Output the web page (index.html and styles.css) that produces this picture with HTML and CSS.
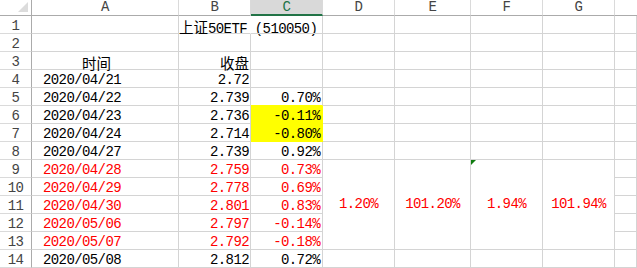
FILE: index.html
```html
<!DOCTYPE html>
<html lang="zh-CN">
<head>
<meta charset="utf-8">
<title>Sheet</title>
<link rel="stylesheet" href="styles.css">
</head>
<body>
<div class="sheet">
  <div class="c corner"><svg width="10" height="10" viewBox="0 0 10 10"><polygon points="10,0 10,10 0,10" fill="#dcdcdc"/></svg></div>
  <div class="c hd">A</div>
  <div class="c hd">B</div>
  <div class="c hd sel">C</div>
  <div class="c hd">D</div>
  <div class="c hd">E</div>
  <div class="c hd">F</div>
  <div class="c hd">G</div>
  <div class="c hd last"></div>

  <div class="c rh">1</div>
  <div class="c"></div>
  <div class="c nr title"><span class="cj">上证</span>50ETF (510050)</div>
  <div class="c"></div>
  <div class="c"></div><div class="c"></div><div class="c"></div><div class="c"></div><div class="c"></div>

  <div class="c rh">2</div>
  <div class="c"></div><div class="c"></div><div class="c"></div>
  <div class="c"></div><div class="c"></div><div class="c"></div><div class="c"></div><div class="c"></div>

  <div class="c rh">3</div>
  <div class="c lh"><span class="cj">时间</span></div>
  <div class="c r"><span class="cj">收盘</span></div>
  <div class="c"></div>
  <div class="c"></div><div class="c"></div><div class="c"></div><div class="c"></div><div class="c"></div>

  <div class="c rh">4</div>
  <div class="c l">2020/04/21</div>
  <div class="c r">2.72</div>
  <div class="c"></div>
  <div class="c"></div><div class="c"></div><div class="c"></div><div class="c"></div><div class="c"></div>

  <div class="c rh">5</div>
  <div class="c l">2020/04/22</div>
  <div class="c r">2.739</div>
  <div class="c rp yb">0.70%</div>
  <div class="c"></div><div class="c"></div><div class="c"></div><div class="c"></div><div class="c"></div>

  <div class="c rh">6</div>
  <div class="c l">2020/04/23</div>
  <div class="c r">2.736</div>
  <div class="c rp yel">-0.11%</div>
  <div class="c"></div><div class="c"></div><div class="c"></div><div class="c"></div><div class="c"></div>

  <div class="c rh">7</div>
  <div class="c l">2020/04/24</div>
  <div class="c r">2.714</div>
  <div class="c rp yel">-0.80%</div>
  <div class="c"></div><div class="c"></div><div class="c"></div><div class="c"></div><div class="c"></div>

  <div class="c rh">8</div>
  <div class="c l">2020/04/27</div>
  <div class="c r">2.739</div>
  <div class="c rp">0.92%</div>
  <div class="c"></div><div class="c"></div><div class="c"></div><div class="c"></div><div class="c"></div>

  <div class="c rh">9</div>
  <div class="c l red">2020/04/28</div>
  <div class="c r red">2.759</div>
  <div class="c rp red">0.73%</div>
  <div class="c m5 red">1.20%</div>
  <div class="c m5 red">101.20%</div>
  <div class="c m5 red note">1.94%<span class="tri"></span></div>
  <div class="c m5 red">101.94%</div>
  <div class="c"></div>

  <div class="c rh">10</div>
  <div class="c l red">2020/04/29</div>
  <div class="c r red">2.778</div>
  <div class="c rp red">0.69%</div>
  <div class="c"></div>

  <div class="c rh">11</div>
  <div class="c l red">2020/04/30</div>
  <div class="c r red">2.801</div>
  <div class="c rp red">0.83%</div>
  <div class="c"></div>

  <div class="c rh">12</div>
  <div class="c l red">2020/05/06</div>
  <div class="c r red">2.797</div>
  <div class="c rp red">-0.14%</div>
  <div class="c"></div>

  <div class="c rh">13</div>
  <div class="c l red">2020/05/07</div>
  <div class="c r red">2.792</div>
  <div class="c rp red">-0.18%</div>
  <div class="c"></div>

  <div class="c rh">14</div>
  <div class="c l">2020/05/08</div>
  <div class="c r">2.812</div>
  <div class="c rp">0.72%</div>
  <div class="c"></div><div class="c"></div><div class="c"></div><div class="c"></div><div class="c"></div>
</div>
</body>
</html>
```

FILE: styles.css
```css
html, body {
  margin: 0;
  padding: 0;
  background: #ffffff;
}

.sheet {
  display: grid;
  grid-template-columns: 32px 147px 72px 72px 72px 76px 72px 72px 1fr;
  grid-template-rows: 16px repeat(14, 18px);
  width: 637px;
  height: 268px;
  overflow: hidden;
  font-family: "Liberation Mono", "Noto Sans CJK SC", monospace;
  font-size: 14px;
  letter-spacing: -0.6px;
  color: #000000;
}

.c {
  box-sizing: border-box;
  border-right: 1px solid #d4d4d4;
  border-bottom: 1px solid #d4d4d4;
  line-height: 13px;
  padding-top: 4px;
  white-space: nowrap;
  min-width: 0;
}

.cj {
  font-family: "Noto Sans CJK SC", sans-serif;
  font-size: 14.5px;
  letter-spacing: 0;
  line-height: 13px;
}

.corner {
  display: flex;
  justify-content: flex-end;
  align-items: flex-end;
  padding: 0 3px 3px 0;
  border-bottom-color: #ababab;
  border-right-color: #ababab;
}

.hd {
  text-align: center;
  padding-top: 1px;
  color: #444444;
  border-bottom-color: #ababab;
  border-right-color: #dadada;
}

.hd.last {
  border-right: none;
}

.sel {
  background: #d9d9d9;
  color: #217346;
  border-bottom: 2px solid #217346;
}

.rh {
  text-align: center;
  color: #444444;
  border-right-color: #ababab;
  border-bottom-color: #dadada;
}

.nr {
  border-right-color: transparent;
}

.title {
  padding-left: 0;
}

.l {
  padding-left: 11px;
}

.lh {
  padding-left: 50px;
}

.r {
  text-align: right;
  padding-right: 1px;
}

.rp {
  text-align: right;
  padding-right: 2px;
}

.red {
  color: #ff0000;
}

.yel {
  background: #ffff00;
  border-right-color: #ffff00;
  border-bottom-color: #ffff00;
}

.yb {
  border-bottom-color: #ffff00;
}

.m5 {
  grid-row: span 5;
  display: flex;
  align-items: center;
  justify-content: center;
  padding-top: 0;
}

.note {
  position: relative;
}

.tri {
  position: absolute;
  left: 0;
  top: 0;
  width: 0;
  height: 0;
  border-top: 5px solid #107c10;
  border-right: 5px solid transparent;
}
```
